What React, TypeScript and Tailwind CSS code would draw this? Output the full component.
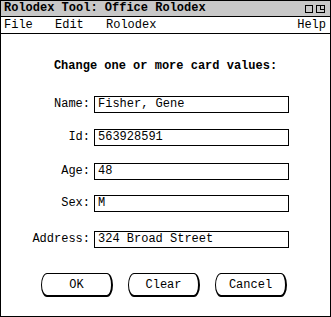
const mono = { fontFamily: '"Liberation Mono", "Courier New", monospace' };

function Field({ label, value, top }: { label: string; value: string; top: string }) {
  return (
    <div className={`flex items-center ${top}`}>
      <span className="w-[89px] text-right text-[12px] leading-[17px]">{label}:</span>
      <div className="ml-[4px] h-[17px] w-[195px] border border-black pl-[3px] text-[12px] leading-[15px]">
        {value}
      </div>
    </div>
  );
}

function Btn({ label }: { label: string }) {
  return (
    <button className="h-[24px] w-[72px] rounded-[6px/12px] border border-black border-r-2 border-b-2 bg-white text-[12px] leading-[20px]">
      {label}
    </button>
  );
}

export default function App() {
  return (
    <div
      className="flex h-[317px] w-[331px] flex-col border border-black bg-white text-black"
      style={mono}
    >
      <div className="flex h-[16px] items-center justify-between border-b border-black bg-[#c8c8c8] pl-[3px] pr-[5px]">
        <span className="text-[12px] font-bold leading-[15px]">Rolodex Tool: Office Rolodex</span>
        <div className="flex items-center gap-[3px]">
          <div className="h-[8px] w-[8px] border border-black" />
          <div className="relative h-[8px] w-[9px] border border-black">
            <div className="absolute right-0 top-0 h-[4px] w-[4px] border-b border-l border-black" />
          </div>
        </div>
      </div>

      <div className="flex h-[17px] items-center border-b border-black px-[3px] text-[12px] leading-[16px]">
        <span className="w-[51px]">File</span>
        <span className="w-[51px]">Edit</span>
        <span>Rolodex</span>
        <span className="ml-auto pr-[1px]">Help</span>
      </div>

      <div className="mt-[25px] text-center text-[12px] font-bold leading-[14px]">
        Change one or more card values:
      </div>

      <div className="mt-[23px] flex flex-col">
        <Field label="Name" value="Fisher, Gene" top="" />
        <Field label="Id" value="563928591" top="mt-[16px]" />
        <Field label="Age" value="48" top="mt-[17px]" />
        <Field label="Sex" value="M" top="mt-[15px]" />
        <Field label="Address" value="324 Broad Street" top="mt-[19px]" />
      </div>

      <div className="mt-[25px] flex justify-center gap-[15px] pr-[3px]">
        <Btn label="OK" />
        <Btn label="Clear" />
        <Btn label="Cancel" />
      </div>
    </div>
  );
}
